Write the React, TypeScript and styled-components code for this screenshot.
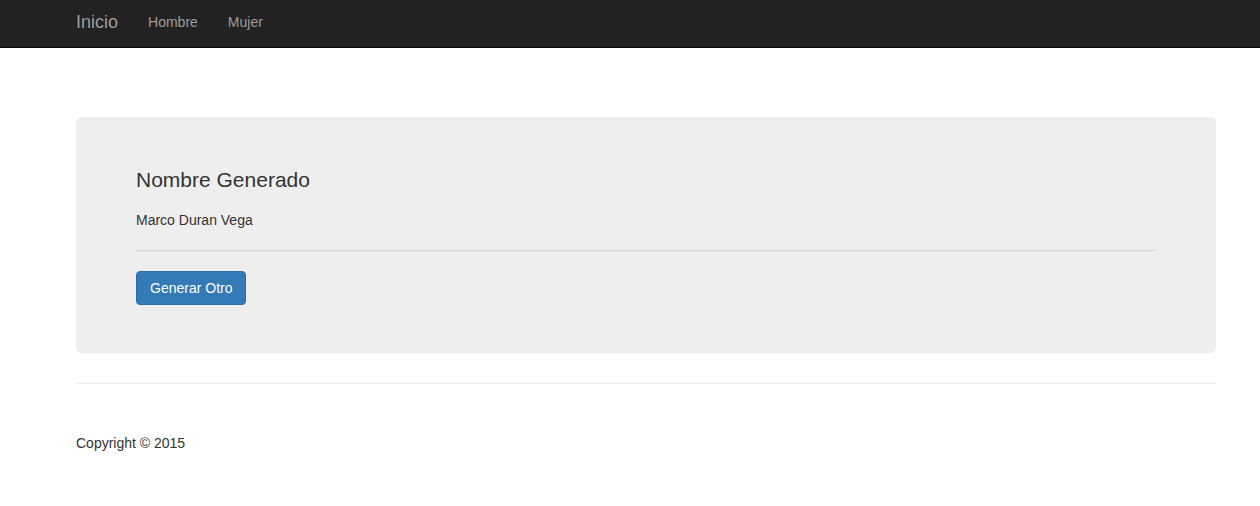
import React, { ReactElement, useState } from 'react';
import styled, { createGlobalStyle } from 'styled-components';

const GlobalStyle = createGlobalStyle`
  html, body {
    margin: 0;
    padding: 0;
    background: #fff;
  }
  body {
    font-family: "Liberation Sans", Arial, Helvetica, sans-serif;
    font-size: 14px;
    line-height: 1.42857;
    color: #333;
  }
  * {
    box-sizing: border-box;
  }
`;

const Navbar = styled.nav`
  height: 48px;
  background-color: #222;
  border-bottom: 1px solid #080808;
`;

const NavContainer = styled.div`
  display: flex;
  align-items: flex-start;
  margin-left: 61px;
`;

const Brand = styled.a`
  padding: 12px 15px;
  font-size: 18px;
  line-height: 20px;
  color: #9d9d9d;
  text-decoration: none;
  cursor: pointer;
`;

const NavLink = styled.a`
  padding: 12px 15px;
  font-size: 14px;
  line-height: 20px;
  color: #9d9d9d;
  text-decoration: none;
  cursor: pointer;

  &:hover {
    color: #fff;
  }
`;

const Container = styled.div`
  width: 1140px;
  margin: 0 0 0 76px;
`;

const Jumbotron = styled.div`
  margin-top: 69px;
  margin-bottom: 30px;
  padding: 48px 60px;
  background-color: #eee;
  border-radius: 6px;
`;

const Heading = styled.p`
  margin: 0 0 15px;
  font-size: 21px;
  line-height: 30px;
`;

const Name = styled.p`
  margin: 0;
  font-size: 14px;
  line-height: 20px;
`;

const Divider = styled.hr<{ $color: string; $spaced?: boolean }>`
  margin: ${(p) => (p.$spaced ? '20px 0' : '0')};
  border: 0;
  border-top: 1px solid ${(p) => p.$color};
  height: 0;
`;

const Button = styled.button`
  display: inline-block;
  height: 34px;
  padding: 6px 13px;
  font-family: inherit;
  font-size: 14px;
  line-height: 20px;
  color: #fff;
  background-color: #337ab7;
  border: 1px solid #2e6da4;
  border-radius: 4px;
  cursor: pointer;

  &:hover {
    background-color: #286090;
  }
`;

const Footer = styled.footer`
  padding-top: 50px;
`;

const FooterText = styled.p`
  margin: 0;
`;

const FIRST = ['Marco', 'Luis', 'Carlos', 'Jorge', 'Pedro'];
const LAST = ['Duran', 'Vega', 'Lopez', 'Ramirez', 'Torres', 'Soto'];

const pick = (list: string[]) => list[Math.floor(Math.random() * list.length)];

export default function App(): ReactElement {
  const [name, setName] = useState<string>('Marco Duran Vega');

  return (
    <>
      <GlobalStyle />
      <Navbar>
        <NavContainer>
          <Brand>Inicio</Brand>
          <NavLink>Hombre</NavLink>
          <NavLink>Mujer</NavLink>
        </NavContainer>
      </Navbar>
      <Container>
        <Jumbotron>
          <Heading>Nombre Generado</Heading>
          <Name>{name}</Name>
          <Divider $color="#d5d5d5" $spaced />
          <Button
            onClick={() => setName(`${pick(FIRST)} ${pick(LAST)} ${pick(LAST)}`)}
          >
            Generar Otro
          </Button>
        </Jumbotron>
        <Divider $color="#eee" />
        <Footer>
          <FooterText>Copyright © 2015</FooterText>
        </Footer>
      </Container>
    </>
  );
}
